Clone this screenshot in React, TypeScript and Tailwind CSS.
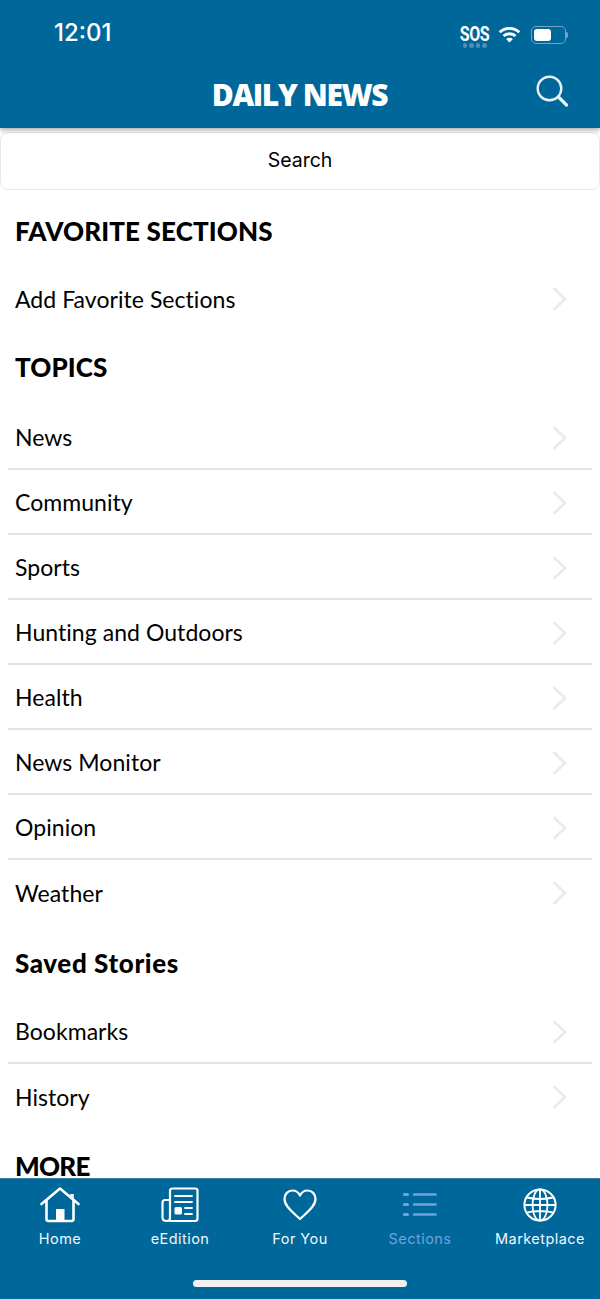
const topics = ["News", "Community", "Sports", "Hunting and Outdoors", "Health", "News Monitor", "Opinion", "Weather"];
const saved = ["Bookmarks", "History"];

function SectionTitle({ children, className }: { children: string; className: string }) {
  return <div className={`px-[15px] flex items-center text-[26px] font-black text-black shrink-0 ${className}`}>{children}</div>;
}

function Chevron() {
  return (
    <svg width="16" height="24" viewBox="0 0 16 24" fill="none" stroke="#ebebee" strokeWidth="3" strokeLinecap="round" strokeLinejoin="round">
      <path d="M2.5 2 L13 12 L2.5 22" />
    </svg>
  );
}

function Row({ label, last }: { label: string; last?: boolean }) {
  return (
    <div className={`mx-2 pl-[7px] pr-[24px] pt-[2px] flex items-center justify-between shrink-0 ${last ? "h-[64px]" : "h-[65px] border-b-2 border-[#e2e2e9]"}`}>
      <span className="text-[23px] text-black tracking-[0.05px]">{label}</span>
      <Chevron />
    </div>
  );
}

function HomeIcon() {
  return (
    <svg width="40" height="36" viewBox="0 0 40 36" fill="none" stroke="white" strokeWidth="2.6" strokeLinecap="round" strokeLinejoin="round">
      <path d="M1.5 17 L20 1.5 L38.5 17" />
      <path d="M32 7 V12" strokeWidth="3.5" strokeLinecap="butt" />
      <path d="M6.5 14 V32 Q6.5 34 8.5 34 H31.5 Q33.5 34 33.5 32 V14" />
      <rect x="16" y="22" width="8.5" height="12" fill="white" stroke="none" />
    </svg>
  );
}

function EditionIcon() {
  return (
    <svg width="38" height="36" viewBox="0 0 38 36" fill="none" stroke="white" strokeWidth="2.2" strokeLinecap="round" strokeLinejoin="round">
      <path d="M9 34 H34 Q36.5 34 36.5 31.5 V3.5 Q36.5 1.5 34 1.5 H11.5 Q9 1.5 9 3.5 V31 Q9 34 6 34 Q1.5 34 1.5 30.5 V16 Q1.5 13 4 13 H9" />
      <path d="M14 9 H31 M14 15 H31 M24 21 H31 M24 27 H31" strokeWidth="1.8" />
      <rect x="13.5" y="20" width="7.5" height="7.5" rx="1.5" fill="white" stroke="none" />
    </svg>
  );
}

function HeartIcon() {
  return (
    <svg width="34" height="32" viewBox="0 0 34 32" fill="none" stroke="white" strokeWidth="2.2" strokeLinejoin="round">
      <path d="M17 30 C12 25 1.5 18 1.5 10 C1.5 5 5 1.5 9.5 1.5 C13 1.5 15.5 3.5 17 6.5 C18.5 3.5 21 1.5 24.5 1.5 C29 1.5 32.5 5 32.5 10 C32.5 18 22 25 17 30 Z" />
    </svg>
  );
}

function ListIcon() {
  return (
    <svg width="34" height="26" viewBox="0 0 34 26" fill="none" stroke="#6fa3dc" strokeWidth="2.6" strokeLinecap="round">
      <path d="M1.5 2.5 H4.5 M1.5 12.5 H4.5 M1.5 22.5 H4.5" strokeWidth="3.2" />
      <path d="M11 2.5 H32.5 M11 12.5 H32.5 M11 22.5 H32.5" />
    </svg>
  );
}

function GlobeIcon() {
  return (
    <svg width="34" height="34" viewBox="0 0 34 34" fill="none" stroke="white" strokeWidth="1.8">
      <circle cx="17" cy="17" r="15.6" strokeWidth="2" />
      <ellipse cx="17" cy="17" rx="7.5" ry="15.6" />
      <path d="M17 1.4 V32.6 M1.4 17 H32.6 M4 9.5 Q17 12.5 30 9.5 M4 24.5 Q17 21.5 30 24.5" />
    </svg>
  );
}

function SearchGlyph() {
  return (
    <svg width="33" height="32" viewBox="0 0 33 32" fill="none" stroke="#e8f3f8" strokeWidth="2.4" strokeLinecap="round">
      <circle cx="13.5" cy="13.5" r="11.8" />
      <path d="M22.5 22 L30.5 30" strokeWidth="3.2" />
    </svg>
  );
}

const tabs = [
  { label: "Home", icon: <HomeIcon /> },
  { label: "eEdition", icon: <EditionIcon /> },
  { label: "For You", icon: <HeartIcon /> },
  { label: "Sections", icon: <ListIcon />, active: true },
  { label: "Marketplace", icon: <GlobeIcon /> },
];

export default function App() {
  return (
    <div className="w-[600px] h-[1299px] flex flex-col overflow-hidden bg-white font-['Lato',sans-serif]">
      {/* Header */}
      <header className="h-[128px] bg-[#00679a] shrink-0 flex flex-col text-white shadow-[0_2px_5px_rgba(0,0,0,0.35)] z-10">
        <div className="h-[66px] pl-[54px] pr-[32px] flex items-center justify-between">
          <span className="font-['Inter',sans-serif] text-[24px] font-medium">12:01</span>
          <div className="flex items-start gap-[9px] pt-[8px]">
            <div className="flex flex-col items-center w-[29px]">
              <span className="font-['Roboto',sans-serif] text-[20px] leading-[16px] font-bold scale-x-[0.8] text-center tracking-[-0.5px]">SOS</span>
              <div className="flex gap-[2px] mt-[1px]">
                <span className="w-[4.5px] h-[4.5px] rounded-full bg-[#4f8fb5]" />
                <span className="w-[4.5px] h-[4.5px] rounded-full bg-[#4f8fb5]" />
                <span className="w-[4.5px] h-[4.5px] rounded-full bg-[#4f8fb5]" />
                <span className="w-[4.5px] h-[4.5px] rounded-full bg-[#4f8fb5]" />
              </div>
            </div>
            <svg width="23" height="17" viewBox="0 0 22 17" fill="none" stroke="white" strokeWidth="2.8">
              <path d="M1.2 6.2 C6.5 1 15.5 1 20.8 6.2" />
              <path d="M5 10 C8 7 14 7 17 10" />
              <path d="M11 16.5 L7.6 13 C9.5 11.4 12.5 11.4 14.4 13 Z" fill="white" stroke="none" />
            </svg>
            <div className="flex items-center ml-[1px]">
              <div className="w-[35px] h-[18px] rounded-[5px] border border-[#6fa6c7] p-[2px]">
                <div className="w-[17px] h-full rounded-[3px] bg-white" />
              </div>
              <div className="w-[2px] h-[6px] rounded-r bg-[#6fa6c7]" />
            </div>
          </div>
        </div>
        <div className="relative flex-1 flex items-center justify-center -mt-[5px]">
          <span className="font-['Open_Sans',sans-serif] text-[30px] font-extrabold tracking-[-1.4px] leading-none -ml-[1px]">DAILY NEWS</span>
          <div className="absolute right-[31px] top-[14px]">
            <SearchGlyph />
          </div>
        </div>
      </header>

      {/* Scrolling list */}
      <main className="flex-1 min-h-0 overflow-hidden">
        <div className="mt-1 h-[58px] rounded-[8px] border border-[#e8e8e8] flex items-center justify-center font-['Inter',sans-serif] text-[19.5px] text-black">
          Search
        </div>
        <div className="h-[6px]" />
        <SectionTitle className="h-[70px] tracking-[0.15px]">FAVORITE SECTIONS</SectionTitle>
        <Row label="Add Favorite Sections" last />
        <SectionTitle className="h-[75px] tracking-[0.1px]">TOPICS</SectionTitle>
        {topics.map((t, i) => (
          <Row key={t} label={t} last={i === topics.length - 1} />
        ))}
        <SectionTitle className="h-[75px] pt-[3px] tracking-[0.6px]">Saved Stories</SectionTitle>
        {saved.map((t, i) => (
          <Row key={t} label={t} last={i === saved.length - 1} />
        ))}
        <SectionTitle className="h-[74px] pt-[2px] tracking-[-0.75px]">MORE</SectionTitle>
      </main>

      {/* Tab bar */}
      <nav className="h-[121px] bg-[#00679a] shrink-0 border-t border-[#3a86ad] flex flex-col">
        <div className="flex h-[87px]">
          {tabs.map((tab) => (
            <div key={tab.label} className="flex-1 flex flex-col items-center">
              <div className="h-[45px] mt-[3px] flex items-center justify-center">{tab.icon}</div>
              <span className={`mt-[1px] font-['Inter',sans-serif] text-[14.5px] font-normal tracking-[0.45px] ${tab.active ? "text-[#6fa3dc]" : "text-[#f2f7fa]"}`}>
                {tab.label}
              </span>
            </div>
          ))}
        </div>
        <div className="mt-[14px] self-center w-[214px] h-[7px] rounded-full bg-[#f0f0f0]" />
      </nav>
    </div>
  );
}
